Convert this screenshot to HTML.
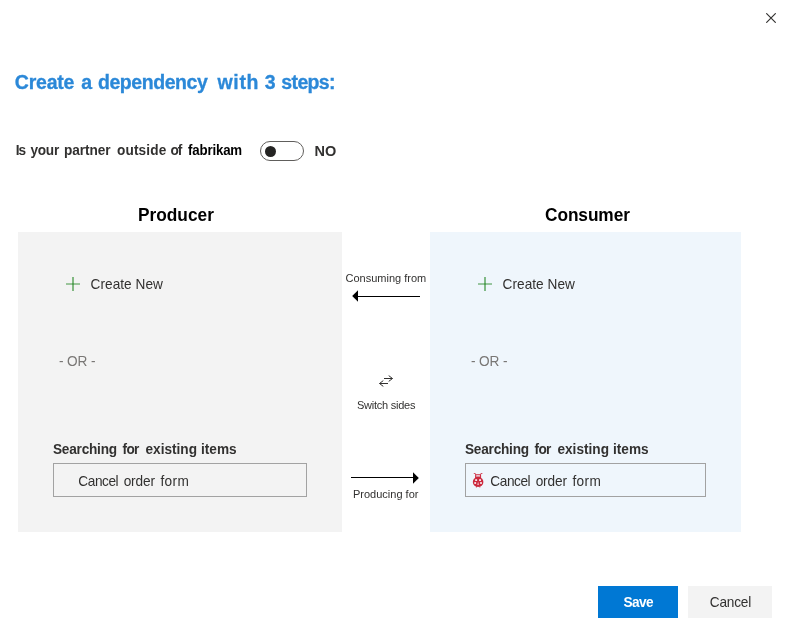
<!DOCTYPE html>
<html lang="en">
<head>
<meta charset="utf-8">
<title>Create a dependency</title>
<style>
  html, body { margin: 0; padding: 0; }
  body {
    width: 790px; height: 638px; overflow: hidden; background: #ffffff;
    font-family: "Liberation Sans", sans-serif; color: #323130; position: relative;
    will-change: transform; /* single composited layer -> greyscale text AA like the reference */
  }
  .t { position: absolute; white-space: nowrap; line-height: 1; margin: 0; padding: 0; }
  .abs { position: absolute; }
  .line { width: 340px; height: 1em; letter-spacing: 0 !important; }
  .w { position: absolute; top: 0; left: 0; }
  /* Segoe-like proportions: taller glyphs at same advance width */
  .q1, .q2, .create, .or, .lbl, .box .t, .btn .t { transform: scaleY(1.1); transform-origin: 0 84.65%; }

  /* close */
  .close { left: 766px; top: 13px; width: 10px; height: 10px; }

  /* title */
  .title { left: 15px; top: 72.5px; font-size: 19.5px; font-weight: bold; color: #2b88d8; -webkit-text-stroke: 0.3px #2b88d8; }

  /* question row */
  .q1 { left: 15px; top: 143.5px; font-size: 13.65px; font-weight: bold; color: #323130; letter-spacing: 0.06px; }
  .q2 { left: 188px; top: 143.5px; font-size: 13.3px; font-weight: bold; color: #000000; letter-spacing: -0.18px; }
  .toggle { left: 260px; top: 141px; width: 42px; height: 18px; border: 1px solid #605e5c; border-radius: 10px; background: #fff; }
  .toggle i { position: absolute; left: 4px; top: 3.5px; width: 11px; height: 11px; border-radius: 50%; background: #252423; }
  .no { left: 314.6px; top: 143.6px; font-size: 14.5px; font-weight: bold; color: #323130; }

  /* headings */
  .h { font-size: 17.3px; font-weight: bold; color: #000; top: 206.9px; letter-spacing: 0; transform: scaleY(1.08); transform-origin: 0 84.65%; }
  .h.p { left: 138px; }
  .h.c { left: 545px; letter-spacing: -0.08px; }

  /* panels */
  .panel { position: absolute; top: 232px; height: 300px; }
  .panel.left { left: 18px; width: 324px; background: #f3f3f3; }
  .panel.right { left: 430px; width: 311px; background: #eff6fc; }

  .plus { left: 48px; top: 45px; width: 14px; height: 14px; }
  .create { left: 72.5px; top: 46.25px; font-size: 13.65px; color: #323130; letter-spacing: 0.05px; }
  .or { left: 41px; top: 123.35px; font-size: 13.65px; color: #797775; letter-spacing: -0.14px; }
  .lbl { left: 35px; top: 210.75px; font-size: 13.65px; font-weight: bold; color: #323130; }
  .box { position: absolute; left: 35px; top: 231px; height: 32px; border: 1px solid #a2a2a2; }
  .left .box { width: 252px; }
  .right .box { width: 239px; }
  .box .t { top: 11.2px; font-size: 13.65px; color: #323130; letter-spacing: 0.06px; }
  .left .box .t { left: 24.5px; }
  .right .box .t { left: 24.5px; }
  .bug { left: 6px; top: 8px; width: 12px; height: 16px; }

  /* middle */
  .m { font-size: 11px; color: #323130; }
  .m.cf { left: 345.5px; top: 272.9px; }
  .m.ss { left: 357px; top: 400.4px; letter-spacing: -0.25px; }
  .m.pf { left: 353px; top: 488.7px; }
  .arrowL { left: 352px; top: 290px; width: 68px; height: 12px; }
  .arrowR { left: 351px; top: 472px; width: 68px; height: 12px; }
  .switch { left: 378px; top: 374px; width: 16px; height: 14px; }

  /* buttons */
  .btn { position: absolute; top: 586px; height: 32px; }
  .btn .t { top: 10.15px; font-size: 13.65px; }
  .save { left: 598px; width: 80px; background: #0078d4; }
  .save .t { left: 25.5px; color: #fff; font-weight: bold; letter-spacing: -0.6px; }
  .cancel { left: 688px; width: 84px; background: #f3f3f3; }
  .cancel .t { left: 21.8px; color: #323130; letter-spacing: -0.2px; }
  /* per-word alignment */
  #tw0 { left: -0.24px; letter-spacing: -0.210px; }
  #tw1 { left: 66.29px; letter-spacing: 0.000px; }
  #tw2 { left: 83.00px; letter-spacing: -0.441px; }
  #tw3 { left: 202.53px; letter-spacing: 0.664px; }
  #tw4 { left: 249.74px; letter-spacing: 0.000px; }
  #tw5 { left: 266.36px; letter-spacing: -0.645px; }
  #qw0 { left: 0.74px; letter-spacing: -0.900px; }
  #qw1 { left: 15.41px; letter-spacing: -0.250px; }
  #qw2 { left: 48.92px; letter-spacing: -0.063px; }
  #qw3 { left: 101.93px; letter-spacing: 0.158px; }
  #qw4 { left: 155.41px; letter-spacing: -0.900px; }
  #lwa0 { left: -0.02px; letter-spacing: -0.228px; }
  #lwa1 { left: 69.59px; letter-spacing: -0.692px; }
  #lwa2 { left: 92.48px; letter-spacing: -0.007px; }
  #lwa3 { left: 147.91px; letter-spacing: 0.028px; }
  #iwa0 { left: -0.17px; letter-spacing: -0.451px; }
  #iwa1 { left: 45.16px; letter-spacing: -0.133px; }
  #iwa2 { left: 81.93px; letter-spacing: 0.401px; }
  #lwb0 { left: -0.02px; letter-spacing: -0.228px; }
  #lwb1 { left: 69.59px; letter-spacing: -0.692px; }
  #lwb2 { left: 92.41px; letter-spacing: 0.003px; }
  #lwb3 { left: 147.91px; letter-spacing: 0.029px; }
  #iwb0 { left: -0.17px; letter-spacing: -0.450px; }
  #iwb1 { left: 45.17px; letter-spacing: -0.134px; }
  #iwb2 { left: 81.93px; letter-spacing: 0.402px; }
</style>
</head>
<body>

<svg class="abs close" viewBox="0 0 10 10"><path d="M0.3 0.3 L9.7 9.7 M9.7 0.3 L0.3 9.7" stroke="#323130" stroke-width="1.15" fill="none"/></svg>

<div class="t line title" id="title"><span class="w" id="tw0">Create</span> <span class="w" id="tw1">a</span> <span class="w" id="tw2">dependency</span> <span class="w" id="tw3">with</span> <span class="w" id="tw4">3</span> <span class="w" id="tw5">steps:</span></div>

<div class="t line q1" id="q1"><span class="w" id="qw0">Is</span> <span class="w" id="qw1">your</span> <span class="w" id="qw2">partner</span> <span class="w" id="qw3">outside</span> <span class="w" id="qw4">of</span></div>
<div class="t q2" id="q2">fabrikam</div>
<div class="abs toggle"><i></i></div>
<div class="t no" id="no">NO</div>

<div class="t h p" id="hp">Producer</div>
<div class="t h c" id="hc">Consumer</div>

<div class="panel left">
  <svg class="abs plus" viewBox="0 0 14 14"><path d="M7 0 V14" stroke="#107c10" stroke-width="1" fill="none"/><path d="M0 7 H14" stroke="#107c10" stroke-width="1" stroke-opacity="0.78" fill="none"/></svg>
  <div class="t create" id="cr1">Create New</div>
  <div class="t or" id="or1">- OR -</div>
  <div class="t line lbl" id="lb1"><span class="w" id="lwa0">Searching</span> <span class="w" id="lwa1">for</span> <span class="w" id="lwa2">existing</span> <span class="w" id="lwa3">items</span></div>
  <div class="box"><div class="t line" id="in1"><span class="w" id="iwa0">Cancel</span> <span class="w" id="iwa1">order</span> <span class="w" id="iwa2">form</span></div></div>
</div>

<div class="t m cf" id="cf">Consuming from</div>
<svg class="abs arrowL" viewBox="0 0 68 12"><rect x="5" y="6" width="63" height="1" fill="#000"/><path d="M0.2 6 L6 0.2 V11.8 Z" fill="#000"/></svg>

<svg class="abs switch" viewBox="0 0 16 14"><g stroke="#323130" stroke-width="1" fill="none"><path d="M6 4.5 H14.4 M10.7 1.6 L14.5 4.5 L10.7 7.4"/><path d="M10 9.5 H1.6 M5.3 6.6 L1.5 9.5 L5.3 12.4"/></g></svg>
<div class="t m ss" id="ss">Switch sides</div>

<svg class="abs arrowR" viewBox="0 0 68 12"><rect x="0" y="5" width="63" height="1" fill="#000"/><path d="M67.8 6 L62 0.2 V11.8 Z" fill="#000"/></svg>
<div class="t m pf" id="pf">Producing for</div>

<div class="panel right">
  <svg class="abs plus" viewBox="0 0 14 14"><path d="M7 0 V14" stroke="#107c10" stroke-width="1" fill="none"/><path d="M0 7 H14" stroke="#107c10" stroke-width="1" stroke-opacity="0.78" fill="none"/></svg>
  <div class="t create" id="cr2">Create New</div>
  <div class="t or" id="or2">- OR -</div>
  <div class="t line lbl" id="lb2"><span class="w" id="lwb0">Searching</span> <span class="w" id="lwb1">for</span> <span class="w" id="lwb2">existing</span> <span class="w" id="lwb3">items</span></div>
  <div class="box">
    <svg class="abs bug" viewBox="0 0 12 16">
      <path d="M1.8 1.5 H3.3 L3.7 3 M10.4 1.5 H8.9 L8.5 3" stroke="#cc293d" stroke-width="0.8" fill="none"/>
      <path fill="#cc293d" fill-rule="evenodd" d="M3.1 6 V3.6 Q3.1 2.3 4.4 2.3 H7.8 Q9.1 2.3 9.1 3.6 V6 Z M4.1 3.8 Q4.1 3.2 4.7 3.2 H7.5 Q8.1 3.2 8.1 3.8 V4.6 H4.1 Z"/>
      <ellipse cx="6.1" cy="10" rx="5.3" ry="4.9" fill="#cc293d"/>
      <path d="M4.3 14.2 L4.5 15.3 M7.9 14.2 L7.7 15.3" stroke="#cc293d" stroke-width="1.1" fill="none"/>
      <g fill="#f6e9ee">
        <rect x="3.2" y="7.2" width="1.9" height="1.8"/>
        <rect x="7.1" y="7.2" width="1.9" height="1.8"/>
        <rect x="2.3" y="10.1" width="1.8" height="1.8"/>
        <rect x="8.1" y="10.1" width="1.8" height="1.8"/>
      </g>
      <path d="M6.1 9.4 L6.9 13 H5.3 Z" fill="#f6e9ee" opacity="0.8"/>
    </svg>
    <div class="t line" id="in2"><span class="w" id="iwb0">Cancel</span> <span class="w" id="iwb1">order</span> <span class="w" id="iwb2">form</span></div>
  </div>
</div>

<div class="btn save"><div class="t" id="sv">Save</div></div>
<div class="btn cancel"><div class="t" id="cn">Cancel</div></div>

</body>
</html>
